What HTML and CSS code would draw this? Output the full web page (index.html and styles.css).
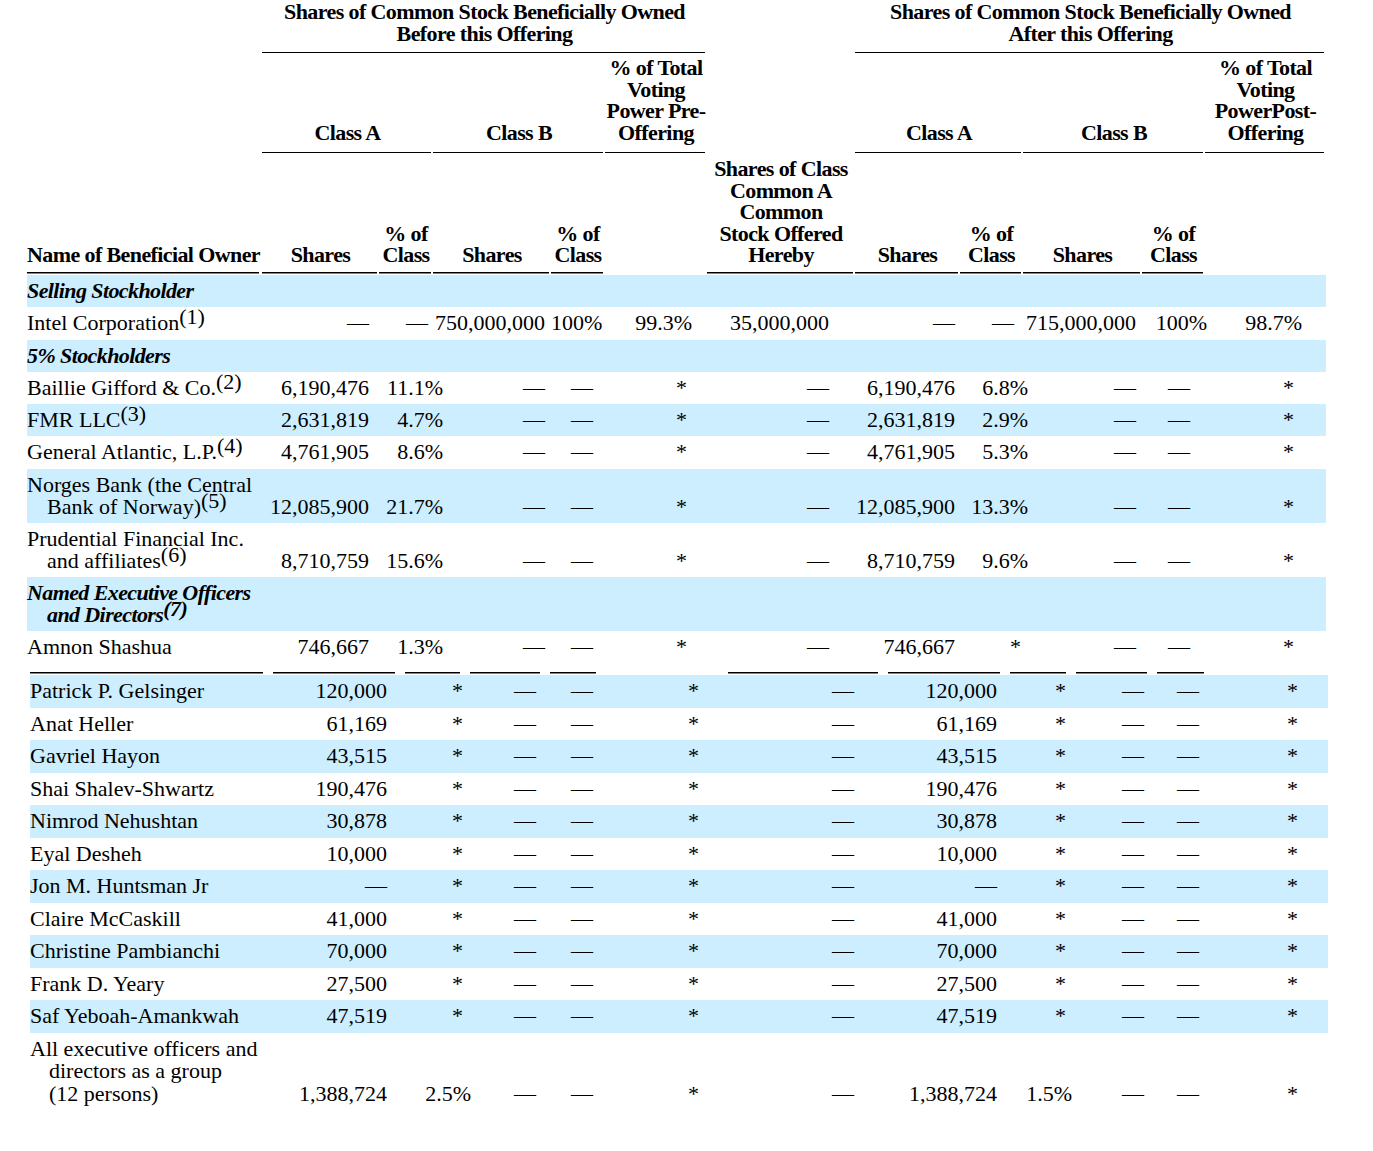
FILE: index.html
```html
<!DOCTYPE html>
<html lang="en">
<head>
<meta charset="utf-8">
<title>Beneficial Ownership</title>
<link rel="stylesheet" href="styles.css">
</head>
<body>
<table class="t1">
  <colgroup>
    <col class="w0"><col class="w1"><col class="w2"><col class="w3"><col class="w4"><col class="w5">
    <col class="w6"><col class="w7"><col class="w8"><col class="w9"><col class="w10"><col class="w11">
  </colgroup>
  <thead>
    <tr class="h1">
      <th></th>
      <th colspan="5" class="u">Shares of Common Stock Beneficially Owned<br>Before this Offering</th>
      <th></th>
      <th colspan="5" class="u">Shares of Common Stock Beneficially Owned<br>After this Offering</th>
    </tr>
    <tr class="h2">
      <th></th>
      <th colspan="2" class="u">Class A</th>
      <th colspan="2" class="u">Class B</th>
      <th class="u">% of Total<br>Voting<br>Power Pre-<br>Offering</th>
      <th></th>
      <th colspan="2" class="u">Class A</th>
      <th colspan="2" class="u">Class B</th>
      <th class="u">% of Total<br>Voting<br>PowerPost-<br>Offering</th>
    </tr>
    <tr class="h3">
      <th class="u3 lname">Name of Beneficial Owner</th>
      <th class="u3">Shares</th>
      <th class="u3">% of<br>Class</th>
      <th class="u3">Shares</th>
      <th class="u3">% of<br>Class</th>
      <th></th>
      <th class="u3">Shares of Class<br>Common A<br>Common<br>Stock Offered<br>Hereby</th>
      <th class="u3">Shares</th>
      <th class="u3">% of<br>Class</th>
      <th class="u3">Shares</th>
      <th class="u3">% of<br>Class</th>
      <th></th>
    </tr>
  </thead>
  <tbody>
    <tr class="band">
      <td class="nm sec">Selling Stockholder</td><td colspan="11"></td>
    </tr>
    <tr>
      <td class="nm">Intel Corporation<sup>(1)</sup></td>
      <td class="c1 d">—</td><td class="c2 d">—</td><td class="c3 n">750,000,000</td><td class="c4 p">100%</td><td class="c5 p">99.3%</td>
      <td class="c6 n">35,000,000</td>
      <td class="c7 d">—</td><td class="c8 d">—</td><td class="c9 n">715,000,000</td><td class="c10 p"><span>100%</span></td><td class="c11 p">98.7%</td>
    </tr>
    <tr class="band">
      <td class="nm sec">5% Stockholders</td><td colspan="11"></td>
    </tr>
    <tr>
      <td class="nm">Baillie Gifford &amp; Co.<sup>(2)</sup></td>
      <td class="c1 n">6,190,476</td><td class="c2 p"><span>11.1%</span></td><td class="c3 d">—</td><td class="c4 d">—</td><td class="c5 s">*</td>
      <td class="c6 d">—</td>
      <td class="c7 n">6,190,476</td><td class="c8 p"><span>6.8%</span></td><td class="c9 d">—</td><td class="c10 d">—</td><td class="c11 s">*</td>
    </tr>
    <tr class="band">
      <td class="nm">FMR LLC<sup>(3)</sup></td>
      <td class="c1 n">2,631,819</td><td class="c2 p"><span>4.7%</span></td><td class="c3 d">—</td><td class="c4 d">—</td><td class="c5 s">*</td>
      <td class="c6 d">—</td>
      <td class="c7 n">2,631,819</td><td class="c8 p"><span>2.9%</span></td><td class="c9 d">—</td><td class="c10 d">—</td><td class="c11 s">*</td>
    </tr>
    <tr>
      <td class="nm">General Atlantic, L.P.<sup>(4)</sup></td>
      <td class="c1 n">4,761,905</td><td class="c2 p"><span>8.6%</span></td><td class="c3 d">—</td><td class="c4 d">—</td><td class="c5 s">*</td>
      <td class="c6 d">—</td>
      <td class="c7 n">4,761,905</td><td class="c8 p"><span>5.3%</span></td><td class="c9 d">—</td><td class="c10 d">—</td><td class="c11 s">*</td>
    </tr>
    <tr class="band">
      <td class="nm">Norges Bank (the Central<br>Bank of Norway)<sup>(5)</sup></td>
      <td class="c1 n">12,085,900</td><td class="c2 p"><span>21.7%</span></td><td class="c3 d">—</td><td class="c4 d">—</td><td class="c5 s">*</td>
      <td class="c6 d">—</td>
      <td class="c7 n">12,085,900</td><td class="c8 p"><span>13.3%</span></td><td class="c9 d">—</td><td class="c10 d">—</td><td class="c11 s">*</td>
    </tr>
    <tr>
      <td class="nm">Prudential Financial Inc.<br>and affiliates<sup>(6)</sup></td>
      <td class="c1 n">8,710,759</td><td class="c2 p"><span>15.6%</span></td><td class="c3 d">—</td><td class="c4 d">—</td><td class="c5 s">*</td>
      <td class="c6 d">—</td>
      <td class="c7 n">8,710,759</td><td class="c8 p"><span>9.6%</span></td><td class="c9 d">—</td><td class="c10 d">—</td><td class="c11 s">*</td>
    </tr>
    <tr class="band">
      <td class="nm sec">Named Executive Officers<br>and Directors<sup>(7)</sup></td><td colspan="11"></td>
    </tr>
    <tr>
      <td class="nm">Amnon Shashua</td>
      <td class="c1 n">746,667</td><td class="c2 p"><span>1.3%</span></td><td class="c3 d">—</td><td class="c4 d">—</td><td class="c5 s">*</td>
      <td class="c6 d">—</td>
      <td class="c7 n">746,667</td><td class="c8 s">*</td><td class="c9 d">—</td><td class="c10 d">—</td><td class="c11 s">*</td>
    </tr>
  </tbody>
</table>

<table class="t2">
  <colgroup>
    <col class="v0"><col class="v1"><col class="v2"><col class="v3"><col class="v4"><col class="v5">
    <col class="v6"><col class="v7"><col class="v8"><col class="v9"><col class="v10"><col class="v11">
  </colgroup>
  <thead>
    <tr class="hr">
      <th class="u2"></th><th class="u2"></th><th class="u2"></th><th class="u2"></th><th class="u2"></th><th></th>
      <th class="u2"></th><th class="u2"></th><th class="u2"></th><th class="u2"></th><th class="u2"></th><th></th>
    </tr>
  </thead>
  <tbody>
    <tr class="band">
      <td class="nm">Patrick P. Gelsinger</td>
      <td class="c1 n">120,000</td><td class="c2 s">*</td><td class="c3 d">—</td><td class="c4 d">—</td><td class="c5 s">*</td>
      <td class="c6 d">—</td><td class="c7 n">120,000</td><td class="c8 s">*</td><td class="c9 d">—</td><td class="c10 d">—</td><td class="c11 s">*</td>
    </tr>
    <tr>
      <td class="nm">Anat Heller</td>
      <td class="c1 n">61,169</td><td class="c2 s">*</td><td class="c3 d">—</td><td class="c4 d">—</td><td class="c5 s">*</td>
      <td class="c6 d">—</td><td class="c7 n">61,169</td><td class="c8 s">*</td><td class="c9 d">—</td><td class="c10 d">—</td><td class="c11 s">*</td>
    </tr>
    <tr class="band">
      <td class="nm">Gavriel Hayon</td>
      <td class="c1 n">43,515</td><td class="c2 s">*</td><td class="c3 d">—</td><td class="c4 d">—</td><td class="c5 s">*</td>
      <td class="c6 d">—</td><td class="c7 n">43,515</td><td class="c8 s">*</td><td class="c9 d">—</td><td class="c10 d">—</td><td class="c11 s">*</td>
    </tr>
    <tr>
      <td class="nm">Shai Shalev-Shwartz</td>
      <td class="c1 n">190,476</td><td class="c2 s">*</td><td class="c3 d">—</td><td class="c4 d">—</td><td class="c5 s">*</td>
      <td class="c6 d">—</td><td class="c7 n">190,476</td><td class="c8 s">*</td><td class="c9 d">—</td><td class="c10 d">—</td><td class="c11 s">*</td>
    </tr>
    <tr class="band">
      <td class="nm">Nimrod Nehushtan</td>
      <td class="c1 n">30,878</td><td class="c2 s">*</td><td class="c3 d">—</td><td class="c4 d">—</td><td class="c5 s">*</td>
      <td class="c6 d">—</td><td class="c7 n">30,878</td><td class="c8 s">*</td><td class="c9 d">—</td><td class="c10 d">—</td><td class="c11 s">*</td>
    </tr>
    <tr>
      <td class="nm">Eyal Desheh</td>
      <td class="c1 n">10,000</td><td class="c2 s">*</td><td class="c3 d">—</td><td class="c4 d">—</td><td class="c5 s">*</td>
      <td class="c6 d">—</td><td class="c7 n">10,000</td><td class="c8 s">*</td><td class="c9 d">—</td><td class="c10 d">—</td><td class="c11 s">*</td>
    </tr>
    <tr class="band">
      <td class="nm">Jon M. Huntsman Jr</td>
      <td class="c1 n">—</td><td class="c2 s">*</td><td class="c3 d">—</td><td class="c4 d">—</td><td class="c5 s">*</td>
      <td class="c6 d">—</td><td class="c7 n">—</td><td class="c8 s">*</td><td class="c9 d">—</td><td class="c10 d">—</td><td class="c11 s">*</td>
    </tr>
    <tr>
      <td class="nm">Claire McCaskill</td>
      <td class="c1 n">41,000</td><td class="c2 s">*</td><td class="c3 d">—</td><td class="c4 d">—</td><td class="c5 s">*</td>
      <td class="c6 d">—</td><td class="c7 n">41,000</td><td class="c8 s">*</td><td class="c9 d">—</td><td class="c10 d">—</td><td class="c11 s">*</td>
    </tr>
    <tr class="band">
      <td class="nm">Christine Pambianchi</td>
      <td class="c1 n">70,000</td><td class="c2 s">*</td><td class="c3 d">—</td><td class="c4 d">—</td><td class="c5 s">*</td>
      <td class="c6 d">—</td><td class="c7 n">70,000</td><td class="c8 s">*</td><td class="c9 d">—</td><td class="c10 d">—</td><td class="c11 s">*</td>
    </tr>
    <tr>
      <td class="nm">Frank D. Yeary</td>
      <td class="c1 n">27,500</td><td class="c2 s">*</td><td class="c3 d">—</td><td class="c4 d">—</td><td class="c5 s">*</td>
      <td class="c6 d">—</td><td class="c7 n">27,500</td><td class="c8 s">*</td><td class="c9 d">—</td><td class="c10 d">—</td><td class="c11 s">*</td>
    </tr>
    <tr class="band">
      <td class="nm">Saf Yeboah-Amankwah</td>
      <td class="c1 n">47,519</td><td class="c2 s">*</td><td class="c3 d">—</td><td class="c4 d">—</td><td class="c5 s">*</td>
      <td class="c6 d">—</td><td class="c7 n">47,519</td><td class="c8 s">*</td><td class="c9 d">—</td><td class="c10 d">—</td><td class="c11 s">*</td>
    </tr>
    <tr>
      <td class="nm">All executive officers and<br>directors as a group<br>(12 persons)</td>
      <td class="c1 n">1,388,724</td><td class="c2 p"><span>2.5%</span></td><td class="c3 d">—</td><td class="c4 d">—</td><td class="c5 s">*</td>
      <td class="c6 d">—</td><td class="c7 n">1,388,724</td><td class="c8 p">1.5%</td><td class="c9 d">—</td><td class="c10 d">—</td><td class="c11 s">*</td>
    </tr>
  </tbody>
</table>
</body>
</html>
```

FILE: styles.css
```css
html, body {
  margin: 0;
  padding: 0;
  background: #fff;
}
body {
  font-family: "Liberation Serif", "Times New Roman", serif;
  font-size: 22px;
  color: #000;
}
table {
  border-collapse: collapse;
  border-spacing: 0;
  table-layout: fixed;
}
th, td {
  padding: 0;
  white-space: nowrap;
  vertical-align: bottom;
}

/* ---------- table 1 ---------- */
.t1 { margin-left: 27px; width: 1299px; }
.w0 { width: 235px; } .w1 { width: 117px; } .w2 { width: 54px; } .w3 { width: 118px; }
.w4 { width: 54px; } .w5 { width: 102px; } .w6 { width: 148px; } .w7 { width: 105px; }
.w8 { width: 63px; } .w9 { width: 119px; } .w10 { width: 63px; } .w11 { width: 121px; }

th {
  font-weight: bold;
  letter-spacing: -0.6px;
  line-height: 21.5px;
  text-align: center;
}
.t1 th.lname { text-align: left; }
.h1 th { padding-top: 1px; padding-bottom: 9px; height: 43px; }
.h2 th { padding-top: 4px; padding-bottom: 10px; }
.h3 th { padding-top: 5px; padding-bottom: 9.5px; }

.u, .u3, .u2 {
  background-image: linear-gradient(#000, #000);
  background-repeat: no-repeat;
}
.u { background-size: calc(100% - 2px) 1.5px; background-position: left 0 bottom 0; }
.u3 { background-size: calc(100% - 2px) 1.5px; background-position: left 0 bottom 2px; }
.t1 th.lname { background-size: calc(100% - 3px) 1.5px; }

.band { background: #cceeff; }

.t1 td { padding-top: 5px; padding-bottom: 5.25px; line-height: 22px; }
.nm {
  text-align: left;
  padding-left: 20px !important;
  text-indent: -20px;
}
.sec { font-weight: bold; font-style: italic; letter-spacing: -0.6px; }
sup {
  font-size: inherit;
  line-height: 0;
  vertical-align: 6px;
}
.n, .d, .s, .p { text-align: right; }
.p span { display: inline-block; }

.t1 .c1 { padding-right: 10px; }
.t1 .c2.p { padding-right: 0; }
.t1 .c2.p span { margin-right: -10px; }
.t1 .c2.d { padding-right: 5px; }
.t1 .c3 { padding-right: 6px; }
.t1 .c4.p { padding-right: 8px; }
.t1 .c4.d { padding-right: 12px; }
.t1 .c5.p { padding-right: 15px; }
.t1 .c5.s { padding-right: 20px; }
.t1 .c6 { padding-right: 26px; }
.t1 .c7 { padding-right: 5px; }
.t1 .c8.p { padding-right: 0; }
.t1 .c8.p span { margin-right: -5px; }
.t1 .c8.d { padding-right: 9px; }
.t1 .c8.s { padding-right: 2px; }
.t1 .c9 { padding-right: 6px; }
.t1 .c10.p { padding-right: 0; }
.t1 .c10.p span { margin-right: -2px; }
.t1 .c10.d { padding-right: 15px; }
.t1 .c11.p { padding-right: 24px; }
.t1 .c11.s { padding-right: 32px; }

/* ---------- table 2 ---------- */
.t2 { margin-left: 30px; width: 1298px; }
.v0 { width: 243px; } .v1 { width: 132px; } .v2 { width: 65px; } .v3 { width: 80px; }
.v4 { width: 56px; } .v5 { width: 122px; } .v6 { width: 160px; } .v7 { width: 122px; }
.v8 { width: 66px; } .v9 { width: 81px; } .v10 { width: 57px; } .v11 { width: 114px; }

.hr th { height: 11.5px; }
.u2 { background-size: calc(100% - 10px) 1.5px; background-position: left 0 bottom 2px; }

.t2 td { padding-top: 5px; padding-bottom: 5px; line-height: 22.5px; }
.t2 .nm { padding-left: 19px !important; text-indent: -19px; }
.t2 .c1 { padding-right: 18px; }
.t2 .c2.s { padding-right: 7px; }
.t2 .c2.p { padding-right: 0; }
.t2 .c2.p span { margin-right: -1px; }
.t2 .c3 { padding-right: 14px; }
.t2 .c4 { padding-right: 13px; }
.t2 .c5 { padding-right: 29px; }
.t2 .c6 { padding-right: 34px; }
.t2 .c7 { padding-right: 13px; }
.t2 .c8.s { padding-right: 10px; }
.t2 .c8.p { padding-right: 4px; }
.t2 .c9 { padding-right: 13px; }
.t2 .c10 { padding-right: 15px; }
.t2 .c11 { padding-right: 30px; }
```
